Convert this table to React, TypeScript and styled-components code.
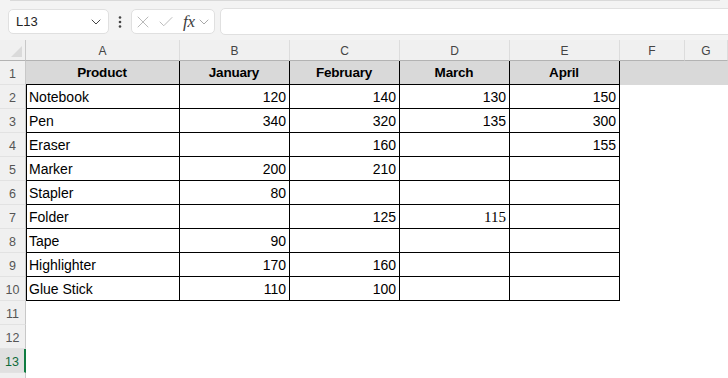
import React from 'react';
import styled, { createGlobalStyle, css } from 'styled-components';
import { ChevronDown, X, Check } from 'lucide-react';

type Value = number | null;
type Row = { name: string; values: Value[]; serif?: number };

const headers = ['Product', 'January', 'February', 'March', 'April'];
const columns = ['A', 'B', 'C', 'D', 'E', 'F', 'G'];

const rows: Row[] = [
  { name: 'Notebook', values: [120, 140, 130, 150] },
  { name: 'Pen', values: [340, 320, 135, 300] },
  { name: 'Eraser', values: [null, 160, null, 155] },
  { name: 'Marker', values: [200, 210, null, null] },
  { name: 'Stapler', values: [80, null, null, null] },
  { name: 'Folder', values: [null, 125, 115, null], serif: 2 },
  { name: 'Tape', values: [90, null, null, null] },
  { name: 'Highlighter', values: [170, 160, null, null] },
  { name: 'Glue Stick', values: [110, 100, null, null] },
];

const GlobalStyle = createGlobalStyle`
  html, body {
    margin: 0;
    padding: 0;
  }

  body {
    background: #f3f3f3;
    font-family: 'Liberation Sans', Arial, sans-serif;
    overflow: hidden;
  }
`;

const Window = styled.div`
  width: 728px;
  height: 378px;
  display: flex;
  flex-direction: column;
  background: #f3f3f3;
  overflow: hidden;
`;

const RibbonEdge = styled.div`
  height: 2px;
  margin: 0 8px 0 10px;
  background: #fff;
  border: 1px solid #d9d9d9;
  border-top: none;
  border-radius: 0 0 6px 6px;
`;

const FormulaBar = styled.div`
  display: flex;
  align-items: center;
  height: 25px;
  margin: 8px 0 6px 8px;
`;

const NameBox = styled.div`
  box-sizing: border-box;
  width: 101px;
  height: 25px;
  display: flex;
  align-items: center;
  justify-content: space-between;
  padding: 0 4px 0 7px;
  background: #fff;
  border: 1px solid #e0e0e0;
  border-radius: 5px;
  font-size: 13px;
  color: #242424;
`;

const MoreHandle = styled.div`
  width: 22px;
  display: flex;
  justify-content: center;
`;

const FunctionBox = styled.div`
  box-sizing: border-box;
  width: 84px;
  height: 25px;
  display: flex;
  align-items: center;
  padding: 0 0 0 1px;
  background: #fff;
  border: 1px solid #e0e0e0;
  border-radius: 5px;
  color: #b4b4b4;
  overflow: hidden;
`;

const FxLabel = styled.span`
  display: flex;
  align-items: center;
  margin-left: 8px;
  font-family: 'Liberation Serif', 'Times New Roman', serif;
  font-style: italic;
  font-size: 17px;
  color: #3c3c3c;
  letter-spacing: -0.3px;
`;

const FormulaInput = styled.div`
  flex: 1;
  height: 25px;
  margin: 0 -12px 0 5px;
  background: #fff;
  border: 1px solid #e0e0e0;
  border-radius: 5px;
`;

const Sheet = styled.div`
  display: grid;
  grid-template-columns: 26px 154px 110px 110px 110px 110px 65px 1fr;
  grid-template-rows: 21px repeat(14, 24px);
  background: #fff;
`;

const Corner = styled.div`
  position: relative;
  box-sizing: border-box;
  background: #f0f0f0;
  border-right: 1px solid #c8c8c8;
  border-bottom: 1px solid #b3b3b3;

  &::after {
    content: '';
    position: absolute;
    right: 3px;
    bottom: 3px;
    border-style: solid;
    border-width: 0 0 11px 11px;
    border-color: transparent transparent #dadada transparent;
  }
`;

const ColumnHead = styled.div`
  box-sizing: border-box;
  display: flex;
  align-items: center;
  justify-content: center;
  padding-top: 2px;
  background: #f0f0f0;
  border-right: 1px solid #dcdcdc;
  border-bottom: 1px solid #b3b3b3;
  font-size: 12px;
  color: #444;
`;

const RowHead = styled.div<{ $active?: boolean }>`
  box-sizing: border-box;
  display: flex;
  align-items: center;
  justify-content: center;
  padding-top: 2px;
  background: #f0f0f0;
  border-right: 1px solid #c8c8c8;
  border-bottom: 1px solid #e2e2e2;
  font-size: 12.5px;
  color: #555;

  ${({ $active }) =>
    $active &&
    css`
      background: #e0e0e0;
      color: #0f6b3b;
      border-right: 2px solid #107c41;
    `}
`;

const Cell = styled.div<{
  $align?: 'left' | 'right' | 'center';
  $header?: boolean;
  $boxed?: boolean;
  $first?: boolean;
  $serif?: boolean;
}>`
  box-sizing: border-box;
  display: flex;
  align-items: center;
  justify-content: ${({ $align }) =>
    $align === 'right' ? 'flex-end' : $align === 'center' ? 'center' : 'flex-start'};
  padding: 1px 3px 0 2px;
  font-size: 14px;
  line-height: 16px;
  color: #000;
  white-space: nowrap;

  ${({ $header }) =>
    $header &&
    css`
      background: #d9d9d9;
      font-weight: 700;
      font-size: 13.5px;
      letter-spacing: -0.2px;
    `}

  ${({ $boxed }) =>
    $boxed &&
    css`
      border-right: 1px solid #000;
      border-bottom: 1px solid #000;
    `}

  ${({ $first }) =>
    $first &&
    css`
      border-left: 1px solid #000;
    `}

  ${({ $serif }) =>
    $serif &&
    css`
      font-family: 'Liberation Serif', 'Times New Roman', serif;
      font-size: 15px;
    `}
`;

const VerticalDots = () => (
  <svg width='4' height='12' viewBox='0 0 4 12'>
    <circle cx='2' cy='1.5' r='1.3' fill='#444' />
    <circle cx='2' cy='6' r='1.3' fill='#444' />
    <circle cx='2' cy='10.5' r='1.3' fill='#444' />
  </svg>
);

const App = () => {
  return (
    <Window>
      <GlobalStyle />
      <RibbonEdge />
      <FormulaBar>
        <NameBox>
          <span>L13</span>
          <ChevronDown size={16} color='#444' strokeWidth={1.5} />
        </NameBox>
        <MoreHandle>
          <VerticalDots />
        </MoreHandle>
        <FunctionBox>
          <X size={20} strokeWidth={1.1} />
          <Check size={18} strokeWidth={1.2} style={{ marginLeft: 4 }} />
          <FxLabel>
            fx
            <ChevronDown size={16} color='#9a9a9a' strokeWidth={1.3} style={{ marginLeft: 1 }} />
          </FxLabel>
        </FunctionBox>
        <FormulaInput />
      </FormulaBar>

      <Sheet>
        <Corner />
        {columns.map((col) => (
          <ColumnHead key={col}>{col}</ColumnHead>
        ))}

        <RowHead>1</RowHead>
        {headers.map((h) => (
          <Cell key={h} $header $boxed $align='center'>
            {h}
          </Cell>
        ))}
        <Cell $header />
        <Cell $header />

        {rows.map((row, i) => (
          <React.Fragment key={row.name}>
            <RowHead>{i + 2}</RowHead>
            <Cell $boxed $first>
              {row.name}
            </Cell>
            {row.values.map((v, j) => (
              <Cell key={j} $boxed $align='right' $serif={row.serif === j}>
                {v ?? ''}
              </Cell>
            ))}
            <Cell />
            <Cell />
          </React.Fragment>
        ))}

        {[11, 12, 13, 14].map((n) => (
          <React.Fragment key={n}>
            <RowHead $active={n === 13}>{n < 14 ? n : ''}</RowHead>
            {columns.map((c) => (
              <Cell key={c} />
            ))}
          </React.Fragment>
        ))}
      </Sheet>
    </Window>
  );
};

export default App;
